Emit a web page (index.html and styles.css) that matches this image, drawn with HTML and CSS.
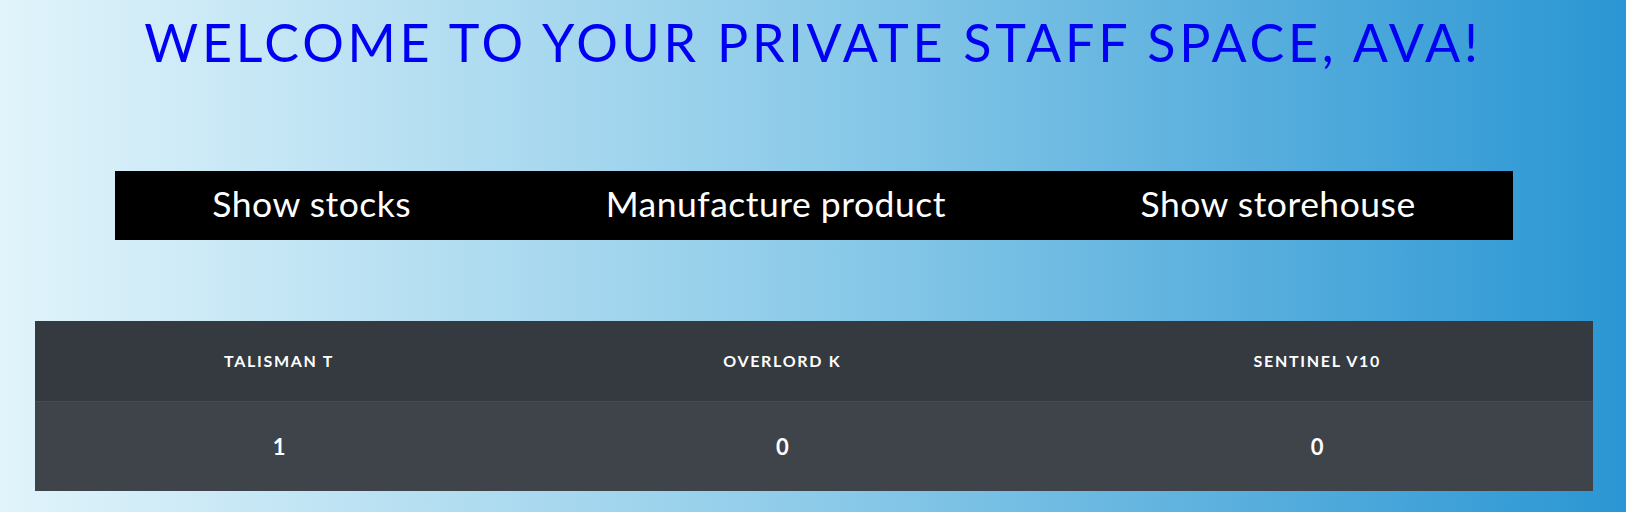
FILE: index.html
```html
<!DOCTYPE html>
<html lang="en">
<head>
<meta charset="utf-8">
<title>Staff space</title>
<link rel="stylesheet" href="styles.css">
</head>
<body>
<main class="page">
  <h1 class="welcome">Welcome to your private staff space, Ava!</h1>
  <nav class="actions">
    <a class="action" href="#">Show stocks</a>
    <a class="action" href="#">Manufacture product</a>
    <a class="action" href="#">Show storehouse</a>
  </nav>
  <table class="stock-table">
    <thead>
      <tr>
        <th>Talisman T</th>
        <th>Overlord K</th>
        <th>Sentinel V10</th>
      </tr>
    </thead>
    <tbody>
      <tr>
        <td>1</td>
        <td>0</td>
        <td>0</td>
      </tr>
    </tbody>
  </table>
</main>
</body>
</html>
```

FILE: styles.css
```css
html, body {
  margin: 0;
  padding: 0;
}

body {
  min-height: 100vh;
  background: linear-gradient(to right, #e1f4fb 0%, #8dcbe9 50%, #2a96d3 100%);
  font-family: Lato, "Open Sans", sans-serif;
}

.page {
  display: flex;
  flex-direction: column;
  align-items: stretch;
  padding: 11px 0 20px;
}

.welcome {
  margin: 0;
  text-align: center;
  color: #0000f5;
  font-weight: 400;
  font-size: 52px;
  line-height: 62px;
  letter-spacing: 3.75px;
  text-transform: uppercase;
}

.actions {
  display: flex;
  justify-content: space-around;
  align-items: center;
  box-sizing: border-box;
  height: 69px;
  padding-bottom: 4px;
  margin: 98px 113px 0 115px;
  background: #000;
}

.action {
  color: #fff;
  text-decoration: none;
  font-size: 35.5px;
  letter-spacing: 0.5px;
}

.stock-table {
  margin: 81px 33px 0 35px;
  border-collapse: collapse;
  color: #fff;
  background: #343a40;
}

.stock-table th {
  height: 78px;
  padding: 0 12px 2px;
  font-size: 16px;
  font-weight: 700;
  letter-spacing: 1.7px;
  text-transform: uppercase;
  text-align: center;
  vertical-align: middle;
}

.stock-table td {
  height: 89px;
  padding: 0 12px;
  border-top: 1px solid #454d55;
  background: #3e444a;
  font-size: 22px;
  font-weight: 700;
  text-align: center;
  vertical-align: middle;
}
```
